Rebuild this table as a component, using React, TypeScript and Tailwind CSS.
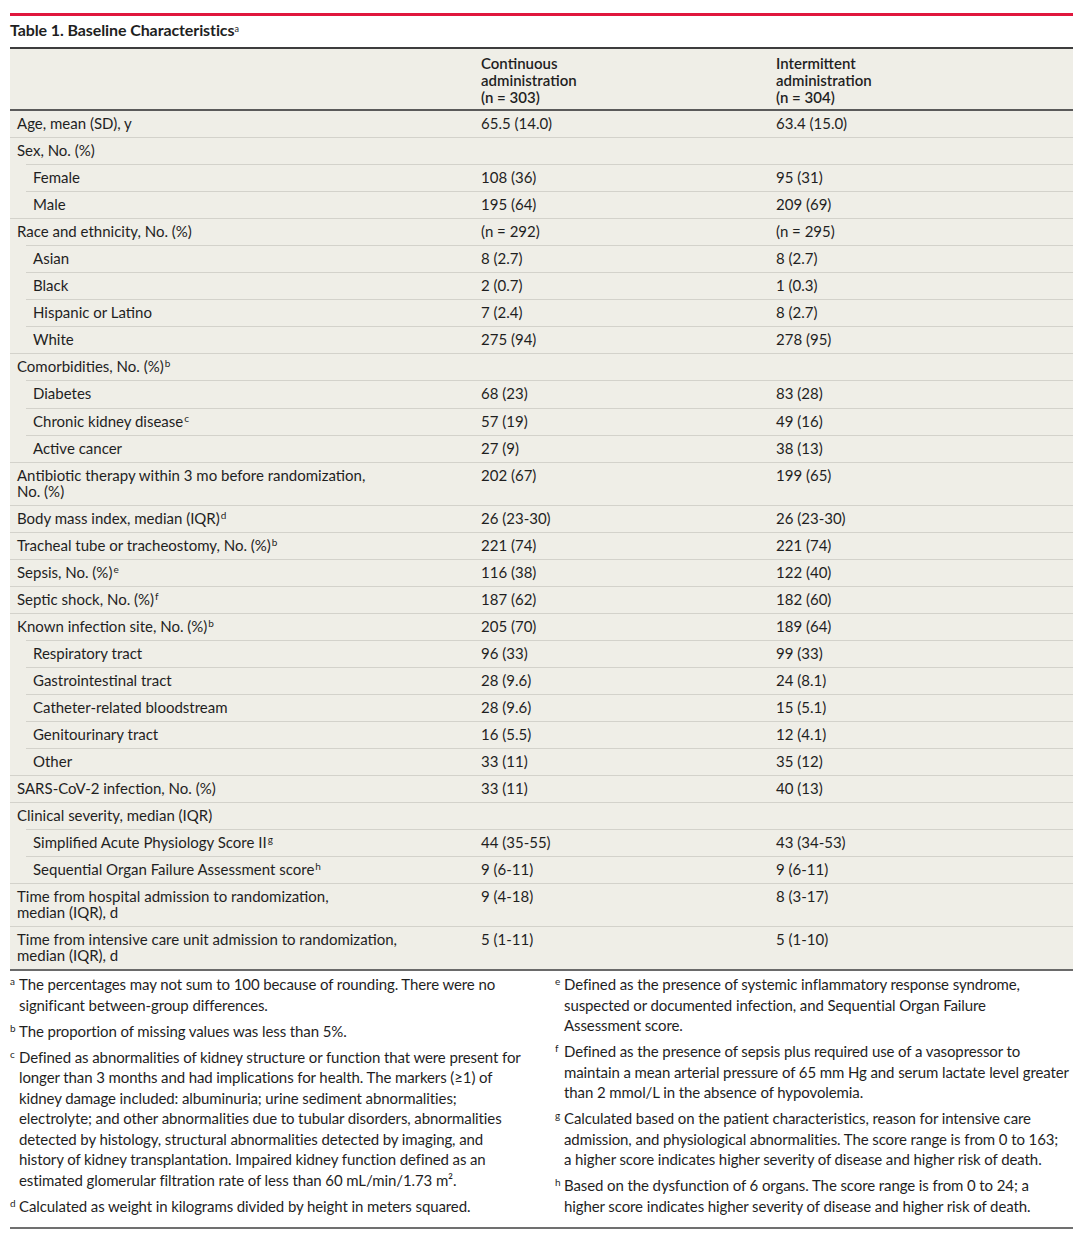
import React from "react";

type Row = {
  label: React.ReactNode;
  c: string;
  i: string;
  indent?: boolean;
};

const Sup = ({ children }: { children: React.ReactNode }) => (
  <sup className="text-[10px] ml-[1px]">{children}</sup>
);

const rows: Row[] = [
  { label: "Age, mean (SD), y", c: "65.5 (14.0)", i: "63.4 (15.0)" },
  { label: "Sex, No. (%)", c: "", i: "" },
  { label: "Female", c: "108 (36)", i: "95 (31)", indent: true },
  { label: "Male", c: "195 (64)", i: "209 (69)", indent: true },
  { label: "Race and ethnicity, No. (%)", c: "(n = 292)", i: "(n = 295)" },
  { label: "Asian", c: "8 (2.7)", i: "8 (2.7)", indent: true },
  { label: "Black", c: "2 (0.7)", i: "1 (0.3)", indent: true },
  { label: "Hispanic or Latino", c: "7 (2.4)", i: "8 (2.7)", indent: true },
  { label: "White", c: "275 (94)", i: "278 (95)", indent: true },
  { label: <>Comorbidities, No. (%)<Sup>b</Sup></>, c: "", i: "" },
  { label: "Diabetes", c: "68 (23)", i: "83 (28)", indent: true },
  { label: <>Chronic kidney disease<Sup>c</Sup></>, c: "57 (19)", i: "49 (16)", indent: true },
  { label: "Active cancer", c: "27 (9)", i: "38 (13)", indent: true },
  {
    label: <>Antibiotic therapy within 3 mo before randomization,<br />No. (%)</>,
    c: "202 (67)",
    i: "199 (65)",
  },
  { label: <>Body mass index, median (IQR)<Sup>d</Sup></>, c: "26 (23-30)", i: "26 (23-30)" },
  { label: <>Tracheal tube or tracheostomy, No. (%)<Sup>b</Sup></>, c: "221 (74)", i: "221 (74)" },
  { label: <>Sepsis, No. (%)<Sup>e</Sup></>, c: "116 (38)", i: "122 (40)" },
  { label: <>Septic shock, No. (%)<Sup>f</Sup></>, c: "187 (62)", i: "182 (60)" },
  { label: <>Known infection site, No. (%)<Sup>b</Sup></>, c: "205 (70)", i: "189 (64)" },
  { label: "Respiratory tract", c: "96 (33)", i: "99 (33)", indent: true },
  { label: "Gastrointestinal tract", c: "28 (9.6)", i: "24 (8.1)", indent: true },
  { label: "Catheter-related bloodstream", c: "28 (9.6)", i: "15 (5.1)", indent: true },
  { label: "Genitourinary tract", c: "16 (5.5)", i: "12 (4.1)", indent: true },
  { label: "Other", c: "33 (11)", i: "35 (12)", indent: true },
  { label: "SARS-CoV-2 infection, No. (%)", c: "33 (11)", i: "40 (13)" },
  { label: "Clinical severity, median (IQR)", c: "", i: "" },
  { label: <>Simplified Acute Physiology Score II<Sup>g</Sup></>, c: "44 (35-55)", i: "43 (34-53)", indent: true },
  { label: <>Sequential Organ Failure Assessment score<Sup>h</Sup></>, c: "9 (6-11)", i: "9 (6-11)", indent: true },
  {
    label: <>Time from hospital admission to randomization,<br />median (IQR), d</>,
    c: "9 (4-18)",
    i: "8 (3-17)",
  },
  {
    label: <>Time from intensive care unit admission to randomization,<br />median (IQR), d</>,
    c: "5 (1-11)",
    i: "5 (1-10)",
  },
];

// footnotes kept line by line so they break where the printed table does
const leftNotes: [string, string[]][] = [
  ["a", ["The percentages may not sum to 100 because of rounding. There were no", "significant between-group differences."]],
  ["b", ["The proportion of missing values was less than 5%."]],
  [
    "c",
    [
      "Defined as abnormalities of kidney structure or function that were present for",
      "longer than 3 months and had implications for health. The markers (≥1) of",
      "kidney damage included: albuminuria; urine sediment abnormalities;",
      "electrolyte; and other abnormalities due to tubular disorders, abnormalities",
      "detected by histology, structural abnormalities detected by imaging, and",
      "history of kidney transplantation. Impaired kidney function defined as an",
      "estimated glomerular filtration rate of less than 60 mL/min/1.73 m².",
    ],
  ],
  ["d", ["Calculated as weight in kilograms divided by height in meters squared."]],
];

const rightNotes: [string, string[]][] = [
  [
    "e",
    [
      "Defined as the presence of systemic inflammatory response syndrome,",
      "suspected or documented infection, and Sequential Organ Failure",
      "Assessment score.",
    ],
  ],
  [
    "f",
    [
      "Defined as the presence of sepsis plus required use of a vasopressor to",
      "maintain a mean arterial pressure of 65 mm Hg and serum lactate level greater",
      "than 2 mmol/L in the absence of hypovolemia.",
    ],
  ],
  [
    "g",
    [
      "Calculated based on the patient characteristics, reason for intensive care",
      "admission, and physiological abnormalities. The score range is from 0 to 163;",
      "a higher score indicates higher severity of disease and higher risk of death.",
    ],
  ],
  [
    "h",
    [
      "Based on the dysfunction of 6 organs. The score range is from 0 to 24; a",
      "higher score indicates higher severity of disease and higher risk of death.",
    ],
  ],
];

const Note = ({ k, lines }: { k: string; lines: string[] }) => (
  <div className="flex mb-[5.5px]">
    <span className="w-[9px] shrink-0 text-[10px] leading-[15px]">{k}</span>
    <div className="flex-1">
      {lines.map((l, i) => (
        <div key={i} className="whitespace-nowrap">
          {l}
        </div>
      ))}
    </div>
  </div>
);

export default function App() {
  return (
    <div className="bg-white w-[1080px] min-h-[1239px] pt-[13px] pl-[10px] pr-[7px] text-[#1f1f1f] font-['Lato',sans-serif]">
      <div className="h-[3px] bg-[#e0173d]" />
      <h1 className="mt-[4px] text-[16px] leading-[20px] font-bold tracking-[-0.1px] pb-[7px]">
        Table 1. Baseline Characteristics<sup className="text-[9px] font-normal">a</sup>
      </h1>

      {/* Table */}
      <div className="bg-[#efeee7] border-t-2 border-[#3d3d3d] border-b-2 border-b-[#6a6a6a] text-[15px] leading-[16px]">
        <div className="grid grid-cols-[464px_295px_1fr] border-b-2 border-[#5a5a5a] pt-[6px] pb-[3px] font-semibold leading-[17px]">
          <div />
          <div className="px-[7px]">
            Continuous
            <br />
            administration
            <br />
            (n = 303)
          </div>
          <div className="px-[7px]">
            Intermittent
            <br />
            administration
            <br />
            (n = 304)
          </div>
        </div>
        {rows.map((r, idx) => (
          <div
            key={idx}
            className={
              (r.indent ? "ml-[16px] grid-cols-[448px_295px_1fr] " : "grid-cols-[464px_295px_1fr] ") +
              (idx === 0 ? "" : "border-t border-[#d3d2cb] ") +
              "grid pt-[4px] pb-[6.06px]"
            }
          >
            <div className="px-[7px]">{r.label}</div>
            <div className="px-[7px]">{r.c}</div>
            <div className="px-[7px]">{r.i}</div>
          </div>
        ))}
      </div>

      {/* Footnotes */}
      <div className="grid grid-cols-[545px_1fr] pt-[3px] pb-[5px] border-b-2 border-[#707070] text-[15px] leading-[20.5px] tracking-[-0.1px]">
        <div>
          {leftNotes.map(([k, l]) => (
            <Note key={k} k={k} lines={l} />
          ))}
        </div>
        <div>
          {rightNotes.map(([k, l]) => (
            <Note key={k} k={k} lines={l} />
          ))}
        </div>
      </div>
    </div>
  );
}
